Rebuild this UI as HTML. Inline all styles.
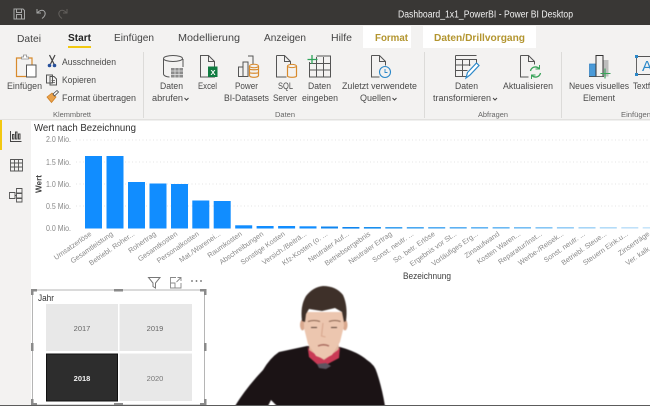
<!DOCTYPE html>
<html lang="de"><head><meta charset="utf-8"><title>Dashboard_1x1_PowerBI - Power BI Desktop</title>
<style>
html,body{margin:0;padding:0;background:#fff;width:650px;height:406px;overflow:hidden}
svg{display:block;filter:blur(.3px)}
text{font-family:"Liberation Sans",sans-serif;fill:#555}
.r text{font-size:9px;fill:#4a4a4a}
.t text{font-size:10.5px;fill:#444}
.g text{font-size:7px;fill:#666}
.y text{font-size:8px;fill:#888}
.x text{font-size:7.2px;fill:#8a8a8a;text-anchor:end}
.l{fill:none;stroke:#555;stroke-width:1}
.o{fill:none;stroke:#d88a2c;stroke-width:1.2}
.p{filter:blur(.6px)}
</style></head><body>
<svg width="650" height="406" viewBox="0 0 650 406" xmlns="http://www.w3.org/2000/svg">
<rect width="650" height="406" fill="#fff"/>
<!-- title bar -->
<rect width="650" height="25" fill="#393735"/>
<g fill="none" stroke="#a8a8a8" stroke-width="1">
<path d="M14 9h9l1.500 1.500V19H14zM16.500 9v3.500h5V9M16.500 19v-4.500h5V19"/>
<path d="M37 9v4h4M37.500 13c2-3 5.500-3.500 7-1.500 1.500 2 .5 5-2.500 7"/>
</g>
<path d="M67 9v4h-4M66.500 13c-2-3-5.500-3.500-7-1.500-1.500 2-.5 5 2.500 7" fill="none" stroke="#625f5c" stroke-width="1"/>
<text x="398" y="17.500" font-size="10" textLength="175" lengthAdjust="spacingAndGlyphs" style="fill:#f2f2f2">Dashboard_1x1_PowerBI - Power BI Desktop</text>
<!-- ribbon -->
<rect y="25" width="650" height="94" fill="#f3f2f1"/>
<rect y="119" width="650" height="1.500" fill="#e2e1df"/>
<rect x="363" y="26" width="48" height="22" fill="#fff"/>
<rect x="423" y="26" width="113" height="22" fill="#fff"/>
<g class="t">
<text x="17" y="42" textLength="24" lengthAdjust="spacingAndGlyphs">Datei</text>
<text x="68" y="41" textLength="23" lengthAdjust="spacingAndGlyphs" font-weight="bold" style="fill:#222">Start</text>
<text x="114" y="41" textLength="40" lengthAdjust="spacingAndGlyphs">Einfügen</text>
<text x="178" y="41" textLength="62" lengthAdjust="spacingAndGlyphs">Modellierung</text>
<text x="264" y="41" textLength="42" lengthAdjust="spacingAndGlyphs">Anzeigen</text>
<text x="331" y="41" textLength="21" lengthAdjust="spacingAndGlyphs">Hilfe</text>
<text x="375" y="41" textLength="33" lengthAdjust="spacingAndGlyphs" font-weight="bold" style="fill:#b3952f">Format</text>
<text x="434" y="41" textLength="91" lengthAdjust="spacingAndGlyphs" font-weight="bold" style="fill:#b3952f">Daten/Drillvorgang</text>
</g>
<rect x="68" y="46" width="23" height="2" fill="#f2c811"/>
<g fill="#dcdbd9"><rect x="143" y="52" width="1" height="66"/><rect x="424" y="52" width="1" height="66"/><rect x="561" y="52" width="1" height="66"/></g>
<g class="r">
<text x="7" y="89" textLength="35" lengthAdjust="spacingAndGlyphs">Einfügen</text>
<text x="62" y="65" textLength="54" lengthAdjust="spacingAndGlyphs">Ausschneiden</text>
<text x="62" y="83" textLength="34" lengthAdjust="spacingAndGlyphs">Kopieren</text>
<text x="62" y="101" textLength="74" lengthAdjust="spacingAndGlyphs">Format übertragen</text>
<text x="160" y="89" textLength="23" lengthAdjust="spacingAndGlyphs">Daten</text>
<text x="152" y="101" textLength="31" lengthAdjust="spacingAndGlyphs">abrufen</text>
<text x="198" y="89" textLength="19" lengthAdjust="spacingAndGlyphs">Excel</text>
<text x="235" y="89" textLength="23" lengthAdjust="spacingAndGlyphs">Power</text>
<text x="224" y="101" textLength="45" lengthAdjust="spacingAndGlyphs">BI-Datasets</text>
<text x="278" y="89" textLength="15" lengthAdjust="spacingAndGlyphs">SQL</text>
<text x="273" y="101" textLength="24" lengthAdjust="spacingAndGlyphs">Server</text>
<text x="308" y="89" textLength="23" lengthAdjust="spacingAndGlyphs">Daten</text>
<text x="302" y="101" textLength="36" lengthAdjust="spacingAndGlyphs">eingeben</text>
<text x="342" y="89" textLength="75" lengthAdjust="spacingAndGlyphs">Zuletzt verwendete</text>
<text x="360" y="101" textLength="31" lengthAdjust="spacingAndGlyphs">Quellen</text>
<text x="455" y="89" textLength="23" lengthAdjust="spacingAndGlyphs">Daten</text>
<text x="433" y="101" textLength="58" lengthAdjust="spacingAndGlyphs">transformieren</text>
<text x="503" y="89" textLength="50" lengthAdjust="spacingAndGlyphs">Aktualisieren</text>
<text x="569" y="89" textLength="60" lengthAdjust="spacingAndGlyphs">Neues visuelles</text>
<text x="583" y="101" textLength="32" lengthAdjust="spacingAndGlyphs">Element</text>
<text x="633" y="89" textLength="28" lengthAdjust="spacingAndGlyphs">Textfeld</text>
</g>
<g class="g">
<text x="53" y="117" textLength="38" lengthAdjust="spacingAndGlyphs">Klemmbrett</text>
<text x="275" y="117" textLength="20" lengthAdjust="spacingAndGlyphs">Daten</text>
<text x="478" y="117" textLength="30" lengthAdjust="spacingAndGlyphs">Abfragen</text>
<text x="621" y="117" textLength="30" lengthAdjust="spacingAndGlyphs">Einfügen</text>
</g>
<g fill="none" stroke="#444" stroke-width="1">
<path d="M184.500 98l2 2 2-2M392.500 98l2 2 2-2M493 98l2 2 2-2"/>
</g>
<!-- paste -->
<path class="o" d="M22 58h-5.500v18.500H27"/><path class="o" d="M29 58h3v7"/>
<path d="M21.500 59v-2h2v-2h3v2h2v2z" fill="#fff" stroke="#8a8a8a" stroke-width=".8"/>
<rect x="26.500" y="65" width="9.500" height="12" fill="#fff" stroke="#555"/>
<!-- scissors -->
<path d="M49.500 55l4.500 9M55 55l-4.500 9" stroke="#444" stroke-width="1.200" fill="none"/>
<circle cx="49.500" cy="65.500" r="1.800" fill="#27509b"/><circle cx="54.500" cy="65.500" r="1.800" fill="#27509b"/>
<!-- copy -->
<path class="l" d="M46.500 75h6v8h-6zM50 76.500h4l2.500 2.500v6H50z" fill="#fff"/>
<path d="M51.500 80.500h3.500M51.500 82.500h3.500" stroke="#555" stroke-width=".7"/>
<!-- brush -->
<path d="M47 97l5-4 4 4-4.500 5.500z" fill="#e9a24c" stroke="#cf7f24" stroke-width=".8"/>
<path d="M53 94l4-3.500 1.500 1.500-4 4z" fill="#fff" stroke="#444" stroke-width=".8"/>
<!-- data cylinder -->
<path class="l" d="M163.500 59v15c0 1.700 3 3 6 3M183 59v8"/>
<ellipse cx="173" cy="58.500" rx="9.500" ry="3" fill="#f3f2f1" stroke="#555"/>
<rect x="171" y="68" width="12" height="9.500" fill="#8c8c8c"/>
<path d="M171 71h12M171 74.500h12M175 68v9.500M179 68v9.500" stroke="#e6e6e6" stroke-width=".7"/>
<!-- excel -->
<path class="l" d="M200.500 55.500h8l6 6v15.500h-14zM208.500 55.500v6h6" fill="#fff"/>
<rect x="208" y="66.500" width="9.500" height="10.500" fill="#107c41"/>
<text x="210.500" y="75" font-size="7.500" font-weight="bold" style="fill:#fff">X</text>
<!-- datasets -->
<path class="l" d="M238.500 67h4.500v9.500h-4.500zM243 62h5v14.500h-5zM248 56h5v8"/>
<ellipse cx="254" cy="66" rx="4.500" ry="1.800" fill="none" stroke="#d88a2c"/>
<path class="o" d="M249.500 66v9.500c0 1 2 1.800 4.500 1.800s4.500-.8 4.500-1.800V66M249.500 69c0 1 9 1 9 0M249.500 72.500c0 1 9 1 9 0"/>
<!-- sql -->
<path class="l" d="M276.500 55.500h8l6 6v3M284.500 55.500v6h6M276.500 55.500v21.500h10"/>
<ellipse cx="292" cy="66" rx="4.500" ry="1.600" fill="none" stroke="#d88a2c"/>
<path class="o" d="M287.500 66v10c0 .8 2 1.300 4.500 1.300s4.500-.5 4.500-1.300V66"/>
<!-- enter data -->
<path class="l" d="M309.500 62v15h21V56h-14M309.500 63.500h21M309.500 70h21M316.500 57v20M323.500 57v20"/>
<path d="M309 64V55M304.500 59.500h10" stroke="#2ea35a" stroke-width="1.300" fill="none" transform="translate(3 0)"/>
<!-- recent -->
<path class="l" d="M371.500 55.500h8l6 6v4M379.500 55.500v6h6M371.500 55.500v21.500h8"/>
<circle cx="385" cy="72" r="5.500" fill="#f3f2f1" stroke="#2b88c9" stroke-width="1.100"/>
<path d="M385 69v3.500h2.500" fill="none" stroke="#2b88c9" stroke-width=".9"/>
<!-- transform -->
<path class="l" d="M455.500 55.500h21M455.500 59.500h21V66M455.500 55.500v21h12M455.500 65h15M455.500 70.500h12M462.500 60v16M469.500 60v6"/>
<path d="M466 78l1.500-5.500 9-9.500 2.500 2.500-9 9.500z" fill="#fff" stroke="#2b88c9" stroke-width="1.200"/>
<!-- refresh -->
<path class="l" d="M520.500 55.500h8l6 6v3M528.500 55.500v6h6M520.500 55.500v21.500h8"/>
<path d="M530.500 71a5 5 0 0 1 8.500-2.500M540.500 73a5 5 0 0 1-8.500 2.500" fill="none" stroke="#3aa35a" stroke-width="1.300"/>
<path d="M539.500 65v4h-4M531.500 79v-4h4" fill="none" stroke="#3aa35a" stroke-width="1"/>
<!-- new visual -->
<rect x="603" y="60" width="5.500" height="16.500" fill="#bdbdbd"/>
<rect x="589.500" y="64" width="6.500" height="12.500" fill="#4a9ad8" stroke="#2b7cc0" stroke-width=".7"/>
<path d="M596 76.500V55.500h7v21" fill="none" stroke="#333" stroke-width="1"/>
<path d="M589 76.500h15" stroke="#444" stroke-width=".8"/>
<path d="M605 68.500v10M600.500 73.500h10" stroke="#3aa35a" stroke-width="1.100" fill="none"/>
<!-- textbox -->
<path d="M636.500 56.500h14M636.500 56.500v18h14" fill="none" stroke="#555" stroke-width=".9"/>
<rect x="635" y="55" width="3" height="3" fill="#2b88c9"/><rect x="635" y="73" width="3" height="3" fill="#2b88c9"/>
<text x="642" y="71" font-size="15" style="fill:#2b88c9">A</text>
<!-- left rail -->
<rect y="120" width="31" height="286" fill="#f3f2f1"/>
<rect y="120" width="2" height="30" fill="#f2c811"/>
<path d="M10.500 131v10.500h11M12.500 139v-4.500h1.500V139zM15.500 139v-7h1.500v7zM18.500 139v-5h1.500v5z" fill="none" stroke="#444" stroke-width="1"/>
<path d="M10.500 159.500h12v11.500h-12zM10.500 163h12M10.500 167h12M14.500 159.500V171M18.500 159.500V171" fill="none" stroke="#555" stroke-width=".9"/>
<path d="M9.500 192.500h5.500v6H9.500zM16.500 188.500h5.500v4.500h-5.500zM16.500 193.500h5.500v4.500h-5.500zM16.500 198.500h5.500v3.500h-5.500zM15 195.500h1.500" fill="none" stroke="#555" stroke-width=".9"/>
<!-- chart -->
<text x="34" y="131" font-size="10" textLength="102" lengthAdjust="spacingAndGlyphs" style="fill:#2e2e2e">Wert nach Bezeichnung</text>
<g stroke="#e4e4e4" stroke-width="1" stroke-dasharray="1 2.500">
<path d="M76 140H650M76 162H650M76 184H650M76 206H650"/>
</g>
<g class="y">
<text x="46" y="142" textLength="25" lengthAdjust="spacingAndGlyphs">2.0 Mio.</text>
<text x="46" y="165" textLength="25" lengthAdjust="spacingAndGlyphs">1.5 Mio.</text>
<text x="46" y="187" textLength="25" lengthAdjust="spacingAndGlyphs">1.0 Mio.</text>
<text x="46" y="209" textLength="25" lengthAdjust="spacingAndGlyphs">0.5 Mio.</text>
<text x="46" y="231" textLength="25" lengthAdjust="spacingAndGlyphs">0.0 Mio.</text>
</g>
<text transform="translate(41.500 193) rotate(-90)" font-size="8.500" textLength="18" lengthAdjust="spacingAndGlyphs" font-weight="bold" style="fill:#444">Wert</text>
<g fill="#118dff">
<rect x="85" y="156" width="17" height="72.500"/>
<rect x="106.500" y="156" width="17" height="72.500"/>
<rect x="128" y="182" width="17" height="46.500"/>
<rect x="149.500" y="183.500" width="17" height="45"/>
<rect x="171" y="184" width="17" height="44.500"/>
<rect x="192.300" y="200.500" width="17" height="28"/>
<rect x="213.700" y="201" width="17" height="27.500"/>
<rect x="235.200" y="225.300" width="17" height="3.200"/>
<rect x="256.600" y="226" width="17" height="2.500"/>
<rect x="278.100" y="226" width="17" height="2.500"/>
<rect x="299.500" y="226.300" width="17" height="2.200"/>
<rect x="321" y="226.500" width="17" height="2" fill="#0f85ef"/>
<rect x="342.400" y="227" width="17" height="1.600" fill="#0f85ef"/>
<rect x="363.900" y="227" width="17" height="1.600" fill="#1a8fee"/>
<rect x="385.300" y="227" width="17" height="1.600" fill="#3ea2f0"/>
<rect x="406.800" y="227" width="17" height="1.600" fill="#4ba8f1"/>
<rect x="428.200" y="227" width="17" height="1.600" fill="#55adf2"/>
<rect x="449.700" y="227" width="17" height="1.600" fill="#5db1f2"/>
<rect x="471.100" y="227" width="17" height="1.600" fill="#64b5f3"/>
<rect x="492.600" y="227" width="17" height="1.600" fill="#6cb9f3"/>
<rect x="514" y="227" width="17" height="1.600" fill="#76bef4"/>
<rect x="535.500" y="227" width="17" height="1.600" fill="#86c6f5"/>
<rect x="556.900" y="227" width="17" height="1.600" fill="#96cdf6"/>
<rect x="578.500" y="227" width="17" height="1.600" fill="#a6d5f7"/>
<rect x="599.800" y="227" width="17" height="1.600" fill="#b4dcf8"/>
<rect x="621.300" y="227" width="17" height="1.600" fill="#c0e1f9"/>
<rect x="642.700" y="227" width="8" height="1.600" fill="#c8e5fa"/>
</g>
<g class="x">
<text transform="translate(92 235) rotate(-35)">Umsatzerlöse</text>
<text transform="translate(113.500 235) rotate(-35)">Gesamtleistung</text>
<text transform="translate(135 235) rotate(-35)">Betriebl. Roher...</text>
<text transform="translate(156.500 235) rotate(-35)">Rohertrag</text>
<text transform="translate(178 235) rotate(-35)">Gesamtkosten</text>
<text transform="translate(199.500 235) rotate(-35)">Personalkosten</text>
<text transform="translate(221 235) rotate(-35)">Mat./Warenei...</text>
<text transform="translate(242.500 235) rotate(-35)">Raumkosten</text>
<text transform="translate(264 235) rotate(-35)">Abschreibungen</text>
<text transform="translate(285.500 235) rotate(-35)">Sonstige Kosten</text>
<text transform="translate(307 235) rotate(-35)">Versich./Beiträ...</text>
<text transform="translate(328 235) rotate(-35)">Kfz-Kosten (o. ...</text>
<text transform="translate(349.500 235) rotate(-35)">Neutraler Auf...</text>
<text transform="translate(371 235) rotate(-35)">Betriebsergebnis</text>
<text transform="translate(392.500 235) rotate(-35)">Neutraler Ertrag</text>
<text transform="translate(414 235) rotate(-35)">Sonst. neutr. ...</text>
<text transform="translate(435.500 235) rotate(-35)">So. betr. Erlöse</text>
<text transform="translate(457 235) rotate(-35)">Ergebnis vor St...</text>
<text transform="translate(478.500 235) rotate(-35)">Vorläufiges Erg...</text>
<text transform="translate(500 235) rotate(-35)">Zinsaufwand</text>
<text transform="translate(521 235) rotate(-35)">Kosten Waren...</text>
<text transform="translate(542.500 235) rotate(-35)">Reparatur/Inst...</text>
<text transform="translate(564 235) rotate(-35)">Werbe-/Reisek...</text>
<text transform="translate(585.500 235) rotate(-35)">Sonst. neutr. ...</text>
<text transform="translate(607 235) rotate(-35)">Betriebl. Steue...</text>
<text transform="translate(628.500 235) rotate(-35)">Steuern Eink.u...</text>
<text transform="translate(650 235) rotate(-35)">Zinserträge</text>
<text transform="translate(671.500 235) rotate(-35)">Ver. kalk. Kosten</text>
</g>
<text x="403" y="279" font-size="9" textLength="48" lengthAdjust="spacingAndGlyphs" style="fill:#3c3c3c">Bezeichnung</text>
<!-- visual header icons -->
<path d="M148.500 277.500h11.500l-4.500 5.500v5l-2.500-1.500v-3.500z" fill="none" stroke="#777" stroke-width="1"/>
<path d="M176 277.500h-5.500v10.500h10.500v-5M170.500 283h4.500v5M176.500 282l4-4M177.500 277.500h3.500v3.500" fill="none" stroke="#888" stroke-width=".9"/>
<g fill="#666"><circle cx="192" cy="281" r=".9"/><circle cx="196.500" cy="281" r=".9"/><circle cx="201" cy="281" r=".9"/></g>
<!-- slicer -->
<rect x="32.500" y="290" width="172" height="115" fill="#fff" stroke="#b5b5b5" stroke-width="1"/>
<g fill="#8a8a8a">
<path d="M31 289h6v2.500h-3.500V295H31zM200 289h6.500v6H204v-3.500h-4zM31 399h2.500v4H37v2.500h-6zM204 399h2.500v6.500H200V403h4z"/>
<rect x="114" y="289" width="9" height="2.500"/><rect x="114" y="403" width="9" height="2.500"/>
<rect x="31" y="343" width="2.500" height="8"/><rect x="204" y="343" width="2.500" height="8"/>
</g>
<text x="38" y="301" font-size="9" textLength="16" lengthAdjust="spacingAndGlyphs" style="fill:#333">Jahr</text>
<rect x="46" y="304" width="72" height="47" fill="#e8e8e8"/>
<rect x="119.500" y="304" width="72.500" height="47" fill="#e8e8e8"/>
<rect x="46.500" y="354" width="71" height="47" fill="#2d2d2d" stroke="#111" stroke-width="1"/>
<rect x="119.500" y="353.500" width="72.500" height="47.500" fill="#e8e8e8"/>
<g font-size="7.500" text-anchor="middle">
<text x="82" y="331" style="fill:#666">2017</text>
<text x="155" y="331" style="fill:#666">2019</text>
<text x="82" y="381" font-weight="bold" style="fill:#f2f2f2">2018</text>
<text x="155" y="381" style="fill:#777">2020</text>
</g>
<!-- person -->
<g class="p">
<path d="M235 406Q246 388 263 370Q270 358 279 352L307 346 340 347Q358 352 367 360Q375 365 377 373Q382 388 385 406H277L271 400 268 406Z" fill="#1b1315"/>
<path d="M309 335L338 335 339 350 323 363 309 350Z" fill="#e0b59c"/>
<path d="M307.500 346L309 357 318 365 324 366 339 358 340 347 338 350 324 360 309 350Z" fill="#c93a55"/>
<path d="M317 364L326 363 331 366 326 369 319 368Z" fill="#5b5560"/>
<ellipse cx="302.500" cy="325" rx="2.500" ry="5.500" fill="#d9a88e"/>
<ellipse cx="345" cy="325" rx="2.500" ry="5.500" fill="#d9a88e"/>
<path d="M304 312L343 312 344 326 340 342 332 355 324 359 316 356 308 344 304 328Z" fill="#ecc6af"/>
<path d="M302 321Q300 306 306 296Q313 287 323 286Q336 286 343 295Q348 306 346 321L344 322 342 312 335 308 322 311 309 309 306 314 305 322Z" fill="#3e3029"/>
<path d="M308 321.500q6-2 12 0M329 321.500q6-2 11.500 0" stroke="#8a6450" stroke-width="1.100" fill="none"/>
<path d="M311 327.500h6M331 327.500h6" stroke="#5c4438" stroke-width="1.100" fill="none"/>
<path d="M323 323l-1.500 13 4 1" stroke="#d8a88f" stroke-width="1.100" fill="none"/>
<path d="M318 346q5.500-2.500 11 0" stroke="#a86a5e" stroke-width="1.400" fill="none"/>
</g>
<!-- bottom edge -->
<rect y="405" width="650" height="1" fill="#5c5c5c"/>
</svg>
</body></html>
